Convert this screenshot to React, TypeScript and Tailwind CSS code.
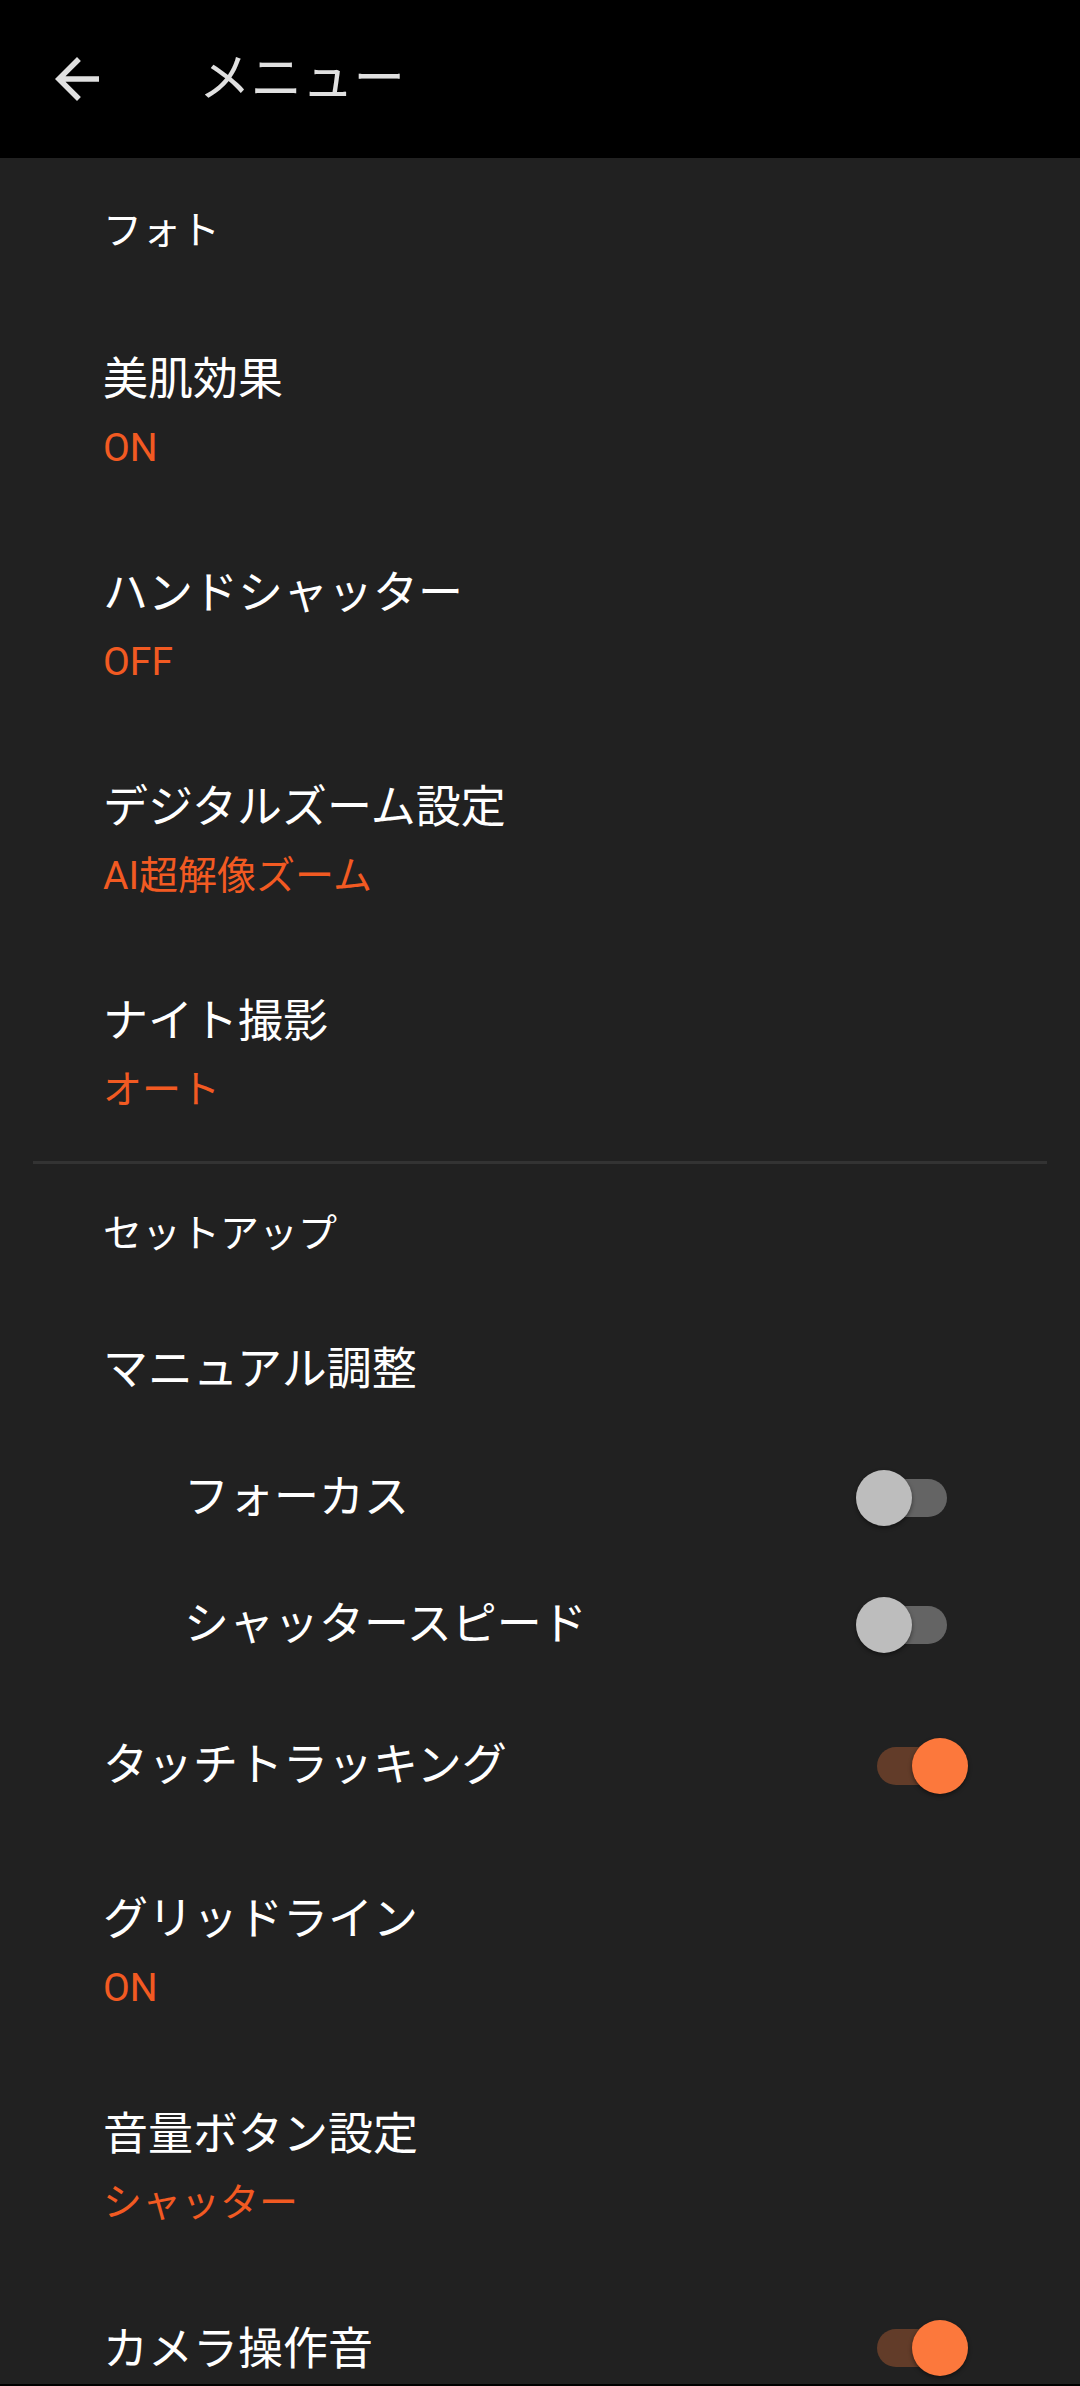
import React from "react";

function Toggle({ on }: { on: boolean }) {
  return (
    <div
      className={
        on
          ? "relative w-[90px] h-[38px] rounded-full bg-[#623c29]"
          : "relative w-[90px] h-[38px] rounded-full bg-[#646464]"
      }
    >
      <div
        className={
          on
            ? "absolute top-[-9px] right-[-1px] w-[56px] h-[56px] rounded-full bg-[#fc783c] shadow-[0_2px_4px_rgba(0,0,0,0.45)]"
            : "absolute top-[-9px] left-[-1px] w-[56px] h-[56px] rounded-full bg-[#bdbdbd] shadow-[0_2px_4px_rgba(0,0,0,0.45)]"
        }
      />
    </div>
  );
}

function TwoLine({ title, sub, h }: { title: string; sub: string; h: string }) {
  return (
    <div className={`flex flex-col justify-center pl-[103px] pt-[4px] ${h}`}>
      <div className="text-[45px] leading-[68px] text-white whitespace-nowrap">{title}</div>
      <div className="text-[39px] leading-[68px] text-[#f25a22] whitespace-nowrap">{sub}</div>
    </div>
  );
}

export default function App() {
  return (
    <div className="w-[1080px] h-[2386px] overflow-hidden bg-black font-[Roboto,'Noto_Sans_CJK_JP',sans-serif]">
      <div className="h-[2384px] overflow-hidden flex flex-col">
        {/* Header */}
        <div className="h-[158px] shrink-0 bg-black flex items-center">
          <svg
            className="ml-[44px] w-[66px] h-[66px]"
            viewBox="0 0 24 24"
            fill="#e0e0e0"
          >
            <path d="M20 11H7.83l5.59-5.59L12 4l-8 8 8 8 1.41-1.41L7.83 13H20v-2z" />
          </svg>
          <div className="ml-[89px] text-[51.5px] leading-none text-[#e0e0e0]">メニュー</div>
        </div>

        <div className="flex-1 bg-[#212121] flex flex-col">
          <div className="h-[147px] shrink-0 flex items-center pl-[103px] text-[39px] text-white">フォト</div>
          <TwoLine title="美肌効果" sub="ON" h="h-[214px] shrink-0" />
          <TwoLine title="ハンドシャッター" sub="OFF" h="h-[214px] shrink-0" />
          <TwoLine title="デジタルズーム設定" sub="AI超解像ズーム" h="h-[214px] shrink-0" />
          <TwoLine title="ナイト撮影" sub="オート" h="h-[214px] shrink-0" />

          <div className="h-[3px] shrink-0 mx-[33px] bg-[#333333]" />

          <div className="h-[138px] shrink-0 flex items-center pl-[103px] pt-[2px] text-[39px] text-white">セットアップ</div>
          <div className="h-[134px] shrink-0 flex items-center pl-[103px] pt-[2px] text-[45px] text-white">マニュアル調整</div>

          <div className="h-[124px] shrink-0 flex items-center justify-between pl-[184px] pr-[133px]">
            <div className="text-[45px] text-white">フォーカス</div>
            <Toggle on={false} />
          </div>
          <div className="h-[129px] shrink-0 flex items-center justify-between pl-[184px] pr-[133px]">
            <div className="text-[45px] text-white">シャッタースピード</div>
            <Toggle on={false} />
          </div>
          <div className="h-[154px] shrink-0 flex items-center justify-between pl-[103px] pr-[113px]">
            <div className="text-[45px] text-white">タッチトラッキング</div>
            <Toggle on={true} />
          </div>

          <TwoLine title="グリッドライン" sub="ON" h="h-[218px] shrink-0" />
          <TwoLine title="音量ボタン設定" sub="シャッター" h="h-[212px] shrink-0" />

          <div className="h-[150px] shrink-0 flex items-center justify-between pl-[103px] pr-[113px]">
            <div className="text-[45px] text-white pt-[4px]">カメラ操作音</div>
            <Toggle on={true} />
          </div>
        </div>
      </div>
    </div>
  );
}
